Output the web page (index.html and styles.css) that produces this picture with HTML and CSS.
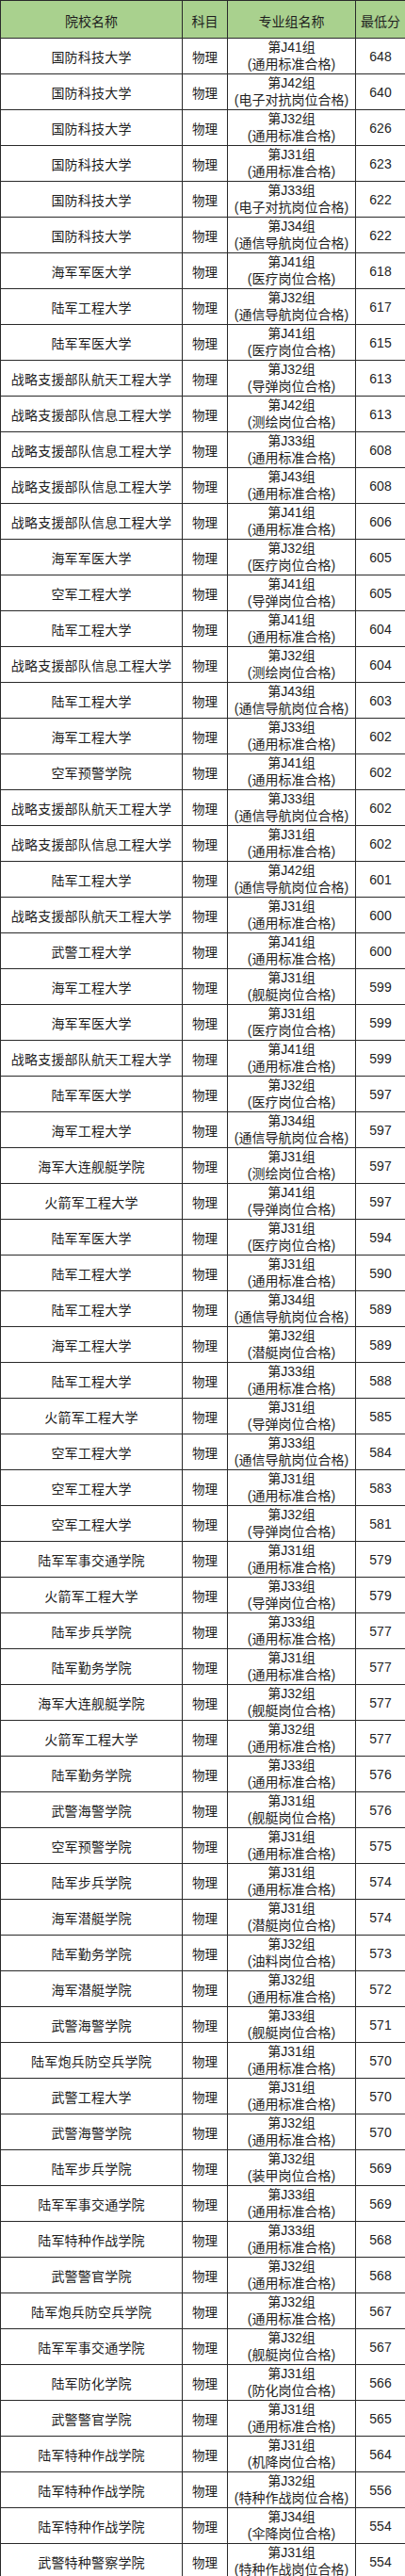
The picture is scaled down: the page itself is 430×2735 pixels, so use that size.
FILE: index.html
```html
<!DOCTYPE html>
<html lang="zh-CN">
<head>
<meta charset="utf-8">
<title>军校录取最低分</title>
<link rel="stylesheet" href="styles.css">
</head>
<body>
<table class="score-table">
  <colgroup>
    <col class="c-school">
    <col class="c-subject">
    <col class="c-group">
    <col class="c-score">
  </colgroup>
  <thead>
    <tr><th>院校名称</th><th>科目</th><th>专业组名称</th><th>最低分</th></tr>
  </thead>
  <tbody id="rows"></tbody>
</table>
<script src="app.js"></script>
</body>
</html>
```

FILE: app.js
```js
const data = [
["国防科技大学","第J41组","通用标准合格",648],
["国防科技大学","第J42组","电子对抗岗位合格",640],
["国防科技大学","第J32组","通用标准合格",626],
["国防科技大学","第J31组","通用标准合格",623],
["国防科技大学","第J33组","电子对抗岗位合格",622],
["国防科技大学","第J34组","通信导航岗位合格",622],
["海军军医大学","第J41组","医疗岗位合格",618],
["陆军工程大学","第J32组","通信导航岗位合格",617],
["陆军军医大学","第J41组","医疗岗位合格",615],
["战略支援部队航天工程大学","第J32组","导弹岗位合格",613],
["战略支援部队信息工程大学","第J42组","测绘岗位合格",613],
["战略支援部队信息工程大学","第J33组","通用标准合格",608],
["战略支援部队信息工程大学","第J43组","通用标准合格",608],
["战略支援部队信息工程大学","第J41组","通用标准合格",606],
["海军军医大学","第J32组","医疗岗位合格",605],
["空军工程大学","第J41组","导弹岗位合格",605],
["陆军工程大学","第J41组","通用标准合格",604],
["战略支援部队信息工程大学","第J32组","测绘岗位合格",604],
["陆军工程大学","第J43组","通信导航岗位合格",603],
["海军工程大学","第J33组","通用标准合格",602],
["空军预警学院","第J41组","通用标准合格",602],
["战略支援部队航天工程大学","第J33组","通信导航岗位合格",602],
["战略支援部队信息工程大学","第J31组","通用标准合格",602],
["陆军工程大学","第J42组","通信导航岗位合格",601],
["战略支援部队航天工程大学","第J31组","通用标准合格",600],
["武警工程大学","第J41组","通用标准合格",600],
["海军工程大学","第J31组","舰艇岗位合格",599],
["海军军医大学","第J31组","医疗岗位合格",599],
["战略支援部队航天工程大学","第J41组","通用标准合格",599],
["陆军军医大学","第J32组","医疗岗位合格",597],
["海军工程大学","第J34组","通信导航岗位合格",597],
["海军大连舰艇学院","第J31组","测绘岗位合格",597],
["火箭军工程大学","第J41组","导弹岗位合格",597],
["陆军军医大学","第J31组","医疗岗位合格",594],
["陆军工程大学","第J31组","通用标准合格",590],
["陆军工程大学","第J34组","通信导航岗位合格",589],
["海军工程大学","第J32组","潜艇岗位合格",589],
["陆军工程大学","第J33组","通用标准合格",588],
["火箭军工程大学","第J31组","导弹岗位合格",585],
["空军工程大学","第J33组","通信导航岗位合格",584],
["空军工程大学","第J31组","通用标准合格",583],
["空军工程大学","第J32组","导弹岗位合格",581],
["陆军军事交通学院","第J31组","通用标准合格",579],
["火箭军工程大学","第J33组","导弹岗位合格",579],
["陆军步兵学院","第J33组","通用标准合格",577],
["陆军勤务学院","第J31组","通用标准合格",577],
["海军大连舰艇学院","第J32组","舰艇岗位合格",577],
["火箭军工程大学","第J32组","通用标准合格",577],
["陆军勤务学院","第J33组","通用标准合格",576],
["武警海警学院","第J31组","舰艇岗位合格",576],
["空军预警学院","第J31组","通用标准合格",575],
["陆军步兵学院","第J31组","通用标准合格",574],
["海军潜艇学院","第J31组","潜艇岗位合格",574],
["陆军勤务学院","第J32组","油料岗位合格",573],
["海军潜艇学院","第J32组","通用标准合格",572],
["武警海警学院","第J33组","舰艇岗位合格",571],
["陆军炮兵防空兵学院","第J31组","通用标准合格",570],
["武警工程大学","第J31组","通用标准合格",570],
["武警海警学院","第J32组","通用标准合格",570],
["陆军步兵学院","第J32组","装甲岗位合格",569],
["陆军军事交通学院","第J33组","通用标准合格",569],
["陆军特种作战学院","第J33组","通用标准合格",568],
["武警警官学院","第J32组","通用标准合格",568],
["陆军炮兵防空兵学院","第J32组","通用标准合格",567],
["陆军军事交通学院","第J32组","舰艇岗位合格",567],
["陆军防化学院","第J31组","防化岗位合格",566],
["武警警官学院","第J31组","通用标准合格",565],
["陆军特种作战学院","第J31组","机降岗位合格",564],
["陆军特种作战学院","第J32组","特种作战岗位合格",556],
["陆军特种作战学院","第J34组","伞降岗位合格",554],
["武警特种警察学院","第J31组","特种作战岗位合格",554]
];
const tbody = document.getElementById("rows");
tbody.innerHTML = data.map(([school, grp, req, score]) =>
  `<tr><td class="school">${school}</td><td class="subject">物理</td>` +
  `<td class="group"><span class="g-line">${grp}</span><span class="g-line">(${req})</span></td>` +
  `<td class="score">${score}</td></tr>`
).join("");
```

FILE: styles.css
```css
html, body {
  margin: 0;
  padding: 0;
  background: #ffffff;
}
body {
  font-family: "Liberation Sans", Arial, "Noto Sans CJK SC", sans-serif;
  color: #1e1e1e;
  font-size: 14px;
}
.score-table {
  width: 430px;
  border-collapse: collapse;
  table-layout: fixed;
}
.c-school { width: 193px; }
.c-subject { width: 48px; }
.c-group { width: 136px; }
.c-score { width: 53px; }
.score-table th,
.score-table td {
  border: 1px solid #2a2a2a;
  padding: 0;
  text-align: center;
  vertical-align: middle;
  height: 37px;
  white-space: nowrap;
  overflow: hidden;
}
.score-table th {
  background: #a9d18e;
  font-weight: normal;
  font-size: 14px;
  padding-top: 2px;
}
.school {
  font-size: 14px;
  letter-spacing: 0.2px;
  padding-top: 2px;
}
.subject {
  font-size: 13.5px;
  padding-top: 2px;
}
.group {
  line-height: 17.5px;
  font-size: 14px;
  padding-top: 2px;
}
.g-line {
  display: block;
}
.score {
  font-size: 14px;
  padding-top: 2px;
}
```
